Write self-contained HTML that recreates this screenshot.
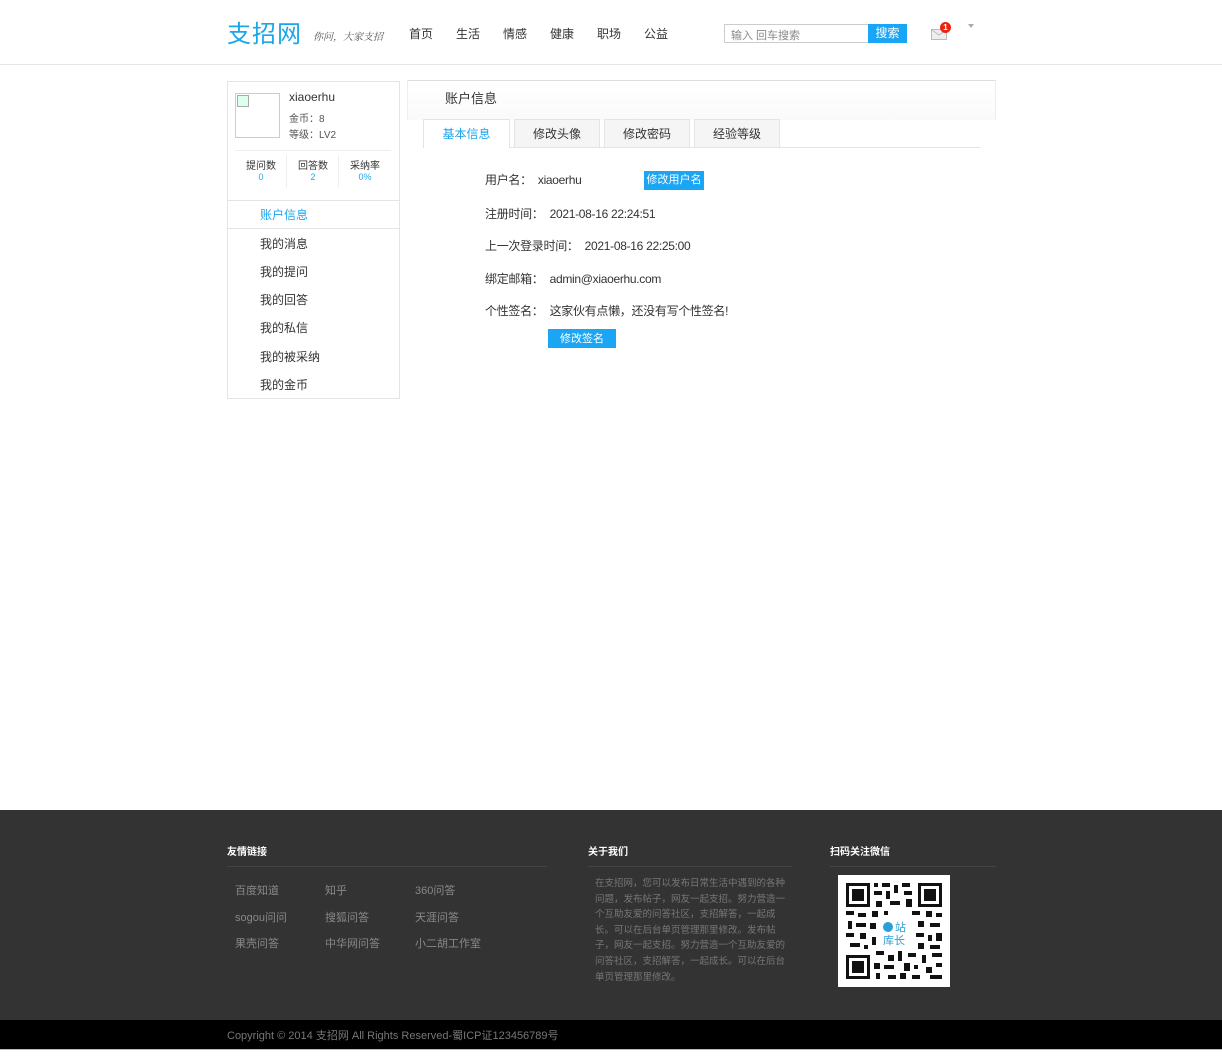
<!DOCTYPE html>
<html><head><meta charset="utf-8"><style>
*{margin:0;padding:0;box-sizing:border-box}
body{width:1222px;height:1064px;background:#fff;font-family:"Liberation Sans","Noto Sans CJK SC",sans-serif;color:#333;position:relative;overflow:hidden;font-size:12px}
.a{position:absolute;white-space:nowrap}
.hdr{position:absolute;left:0;top:0;width:1222px;height:65px;border-bottom:1px solid #e6e6e6}
.blue{color:#1da5ee}
.btn{position:absolute;background:#1ba5f5;color:#fff;font-size:11px;text-align:center}
.foot{position:absolute;left:0;top:810px;width:1222px;height:210px;background:#333}
.fl{color:#888;font-size:11px}
.row{letter-spacing:-0.3px}
</style></head><body>
<div class="hdr"></div>
<div class="a" style="left:227px;top:14px;font-size:24px;color:#1aa6e9;letter-spacing:1px">支招网</div>
<div class="a" style="left:313px;top:28px;font-size:10px;color:#555;font-family:'Liberation Serif','Noto Serif CJK SC',serif;font-style:italic">你问，大家支招</div>
<div class="a" style="left:409px;top:25px;font-size:12px">首页</div>
<div class="a" style="left:456px;top:25px;font-size:12px">生活</div>
<div class="a" style="left:503px;top:25px;font-size:12px">情感</div>
<div class="a" style="left:550px;top:25px;font-size:12px">健康</div>
<div class="a" style="left:597px;top:25px;font-size:12px">职场</div>
<div class="a" style="left:644px;top:25px;font-size:12px">公益</div>
<div class="a" style="left:724px;top:24px;width:145px;height:19px;border:1px solid #ccc;font-size:11px;color:#888;padding:2px 6px">输入 回车搜索</div>
<div class="btn" style="left:868px;top:24px;width:39px;height:19px;line-height:19px;font-size:12px">搜索</div>
<svg class="a" style="left:931px;top:27px" width="17" height="14"><rect x="0.5" y="2.5" width="15" height="10" fill="#eee" stroke="#bbb"/><path d="M1 3l7 5 7-5" fill="none" stroke="#bbb"/></svg>
<div class="a" style="left:940px;top:22px;width:11px;height:11px;border-radius:50%;background:#e21;color:#fff;font-size:8px;line-height:11px;text-align:center;font-weight:bold">1</div>
<div class="a" style="left:968px;top:24px;width:0;height:0;border-left:3px solid transparent;border-right:3px solid transparent;border-top:4px solid #aaa"></div>

<div class="a" style="left:227px;top:81px;width:173px;height:318px;border:1px solid #e4e4e4"></div>
<div class="a" style="left:228px;top:200px;width:171px;height:1px;background:#e4e4e4"></div>
<div class="a" style="left:228px;top:228px;width:171px;height:1px;background:#e4e4e4"></div>
<div class="a" style="left:235px;top:93px;width:45px;height:45px;border:1px solid #ccc"></div>
<div class="a" style="left:237px;top:95px;width:12px;height:12px;border:1px solid #aaa;background:#dfe"></div>
<div class="a" style="left:289px;top:90px;font-size:12px">xiaoerhu</div>
<div class="a" style="left:289px;top:110px;font-size:10px;color:#555">金币：8</div>
<div class="a" style="left:289px;top:126px;font-size:10px;color:#555">等级：LV2</div>
<div class="a" style="left:235px;top:150px;width:156px;height:1px;background:#eee"></div>
<div class="a" style="left:286px;top:155px;width:1px;height:33px;background:#eee"></div>
<div class="a" style="left:338px;top:155px;width:1px;height:33px;background:#eee"></div>
<div class="a" style="left:235px;top:157px;width:52px;text-align:center;font-size:10px">提问数<br><span class="blue" style="font-size:9px">0</span></div>
<div class="a" style="left:287px;top:157px;width:52px;text-align:center;font-size:10px">回答数<br><span class="blue" style="font-size:9px">2</span></div>
<div class="a" style="left:339px;top:157px;width:52px;text-align:center;font-size:10px">采纳率<br><span class="blue" style="font-size:9px">0%</span></div>
<div class="a blue" style="left:260px;top:206px;font-size:12px">账户信息</div>
<div class="a" style="left:260px;top:235px;font-size:12px">我的消息</div>
<div class="a" style="left:260px;top:263px;font-size:12px">我的提问</div>
<div class="a" style="left:260px;top:291px;font-size:12px">我的回答</div>
<div class="a" style="left:260px;top:319px;font-size:12px">我的私信</div>
<div class="a" style="left:260px;top:348px;font-size:12px">我的被采纳</div>
<div class="a" style="left:260px;top:376px;font-size:12px">我的金币</div>

<div class="a" style="left:407px;top:80px;width:589px;height:40px;border-top:1px solid #ddd;border-left:1px solid #eee;border-right:1px solid #eee;background:linear-gradient(#fff,#fafafa)"></div>
<div class="a" style="left:445px;top:88px;font-size:13px">账户信息</div>
<div class="a" style="left:423px;top:147px;width:557px;height:1px;background:#e4e4e4"></div>
<div class="a blue" style="left:423px;top:119px;width:87px;height:29px;border:1px solid #e4e4e4;border-bottom:none;background:#fff;text-align:center;line-height:28px;font-size:12px">基本信息</div>
<div class="a" style="left:514px;top:119px;width:86px;height:28px;border:1px solid #e4e4e4;border-bottom:none;background:#f5f5f5;text-align:center;line-height:28px;font-size:12px">修改头像</div>
<div class="a" style="left:604px;top:119px;width:86px;height:28px;border:1px solid #e4e4e4;border-bottom:none;background:#f5f5f5;text-align:center;line-height:28px;font-size:12px">修改密码</div>
<div class="a" style="left:694px;top:119px;width:86px;height:28px;border:1px solid #e4e4e4;border-bottom:none;background:#f5f5f5;text-align:center;line-height:28px;font-size:12px">经验等级</div>
<div class="a row" style="left:485px;top:171px;font-size:12px">用户名：&nbsp; xiaoerhu</div>
<div class="btn" style="left:644px;top:171px;width:60px;height:19px;line-height:19px">修改用户名</div>
<div class="a row" style="left:485px;top:205px;font-size:12px">注册时间：&nbsp; 2021-08-16 22:24:51</div>
<div class="a row" style="left:485px;top:237px;font-size:12px">上一次登录时间：&nbsp; 2021-08-16 22:25:00</div>
<div class="a row" style="left:485px;top:270px;font-size:12px">绑定邮箱：&nbsp; admin@xiaoerhu.com</div>
<div class="a row" style="left:485px;top:302px;font-size:12px">个性签名：&nbsp; 这家伙有点懒，还没有写个性签名!</div>
<div class="btn" style="left:548px;top:329px;width:68px;height:19px;line-height:21px">修改签名</div>

<div class="foot"></div>
<div class="a" style="left:227px;top:843px;font-size:10px;color:#fff;font-weight:bold">友情链接</div>
<div class="a" style="left:227px;top:866px;width:320px;height:1px;background:#444"></div>
<div class="a fl" style="left:235px;top:882px">百度知道</div>
<div class="a fl" style="left:325px;top:882px">知乎</div>
<div class="a fl" style="left:415px;top:882px">360问答</div>
<div class="a fl" style="left:235px;top:909px">sogou问问</div>
<div class="a fl" style="left:325px;top:909px">搜狐问答</div>
<div class="a fl" style="left:415px;top:909px">天涯问答</div>
<div class="a fl" style="left:235px;top:935px">果壳问答</div>
<div class="a fl" style="left:325px;top:935px">中华网问答</div>
<div class="a fl" style="left:415px;top:935px">小二胡工作室</div>
<div class="a" style="left:588px;top:843px;font-size:10px;color:#fff;font-weight:bold">关于我们</div>
<div class="a" style="left:588px;top:866px;width:204px;height:1px;background:#444"></div>
<div class="a" style="left:595px;top:876px;width:192px;white-space:normal;font-size:9.5px;line-height:15.6px;color:#777">在支招网，您可以发布日常生活中遇到的各种问题，发布帖子，网友一起支招。努力营造一个互助友爱的问答社区，支招解答，一起成长。可以在后台单页管理那里修改。发布帖子，网友一起支招。努力营造一个互助友爱的问答社区，支招解答，一起成长。可以在后台单页管理那里修改。</div>
<div class="a" style="left:830px;top:843px;font-size:10px;color:#fff;font-weight:bold">扫码关注微信</div>
<div class="a" style="left:830px;top:866px;width:166px;height:1px;background:#444"></div>
<svg class="a" style="left:838px;top:875px" width="112" height="112" viewBox="0 0 112 112">
<rect width="112" height="112" fill="#fff"/>
<g fill="#111"><path d="M8 8h24v24H8zM80 8h24v24H80zM8 80h24v24H8z"/></g>
<g fill="#fff"><path d="M11 11h18v18H11zM83 11h18v18H83zM11 83h18v18H11z"/></g>
<g fill="#111"><path d="M14 14h12v12H14zM86 14h12v12H86zM14 86h12v12H14z"/>
<path d="M36 8h4v4h-4zM44 8h8v4h-8zM56 10h4v8h-4zM64 8h8v4h-8zM36 16h8v4h-8zM48 16h4v8h-4zM66 16h8v4h-8zM38 26h6v6h-6zM52 26h10v4H52zM68 24h6v8h-6zM8 36h8v4H8zM20 38h8v4h-8zM34 36h6v6h-6zM46 36h4v8h-4zM74 36h8v4h-8zM88 36h6v6h-6zM98 38h6v4h-6zM10 46h4v8h-4zM18 48h10v4H18zM32 48h6v6h-6zM80 46h6v6h-6zM92 48h10v4H92zM8 58h8v4H8zM22 58h6v6h-6zM34 62h4v8h-4zM78 58h8v4h-8zM90 60h4v6h-4zM98 58h6v8h-6zM12 68h10v4H12zM26 70h4v4h-4zM80 68h6v6h-6zM92 70h10v4H92zM38 76h8v4h-8zM50 80h6v6h-6zM60 76h4v10h-4zM70 78h8v4h-8zM84 80h4v8h-4zM94 78h10v4H94zM36 88h6v6h-6zM46 90h10v4H46zM66 88h6v8h-6zM76 90h4v4h-4zM88 92h6v6h-6zM98 88h6v4h-6zM38 98h4v6h-4zM50 100h8v4h-8zM62 98h6v6h-6zM74 100h8v4h-8zM92 100h12v4H92z"/></g>
<rect x="40" y="40" width="32" height="32" fill="#fff"/>
<circle cx="50" cy="52" r="5" fill="#2a9fd6"/>
<text x="57" y="56" font-size="11" fill="#2a9fd6" font-family="Noto Sans CJK SC">站</text>
<text x="45" y="69" font-size="11" fill="#2a9fd6" font-family="Noto Sans CJK SC">库长</text>
</svg>
<div class="a" style="left:0;top:1020px;width:1222px;height:29px;background:#000"></div>
<div class="a" style="left:227px;top:1027px;font-size:11px;color:#777">Copyright © 2014 支招网 All Rights Reserved-蜀ICP证123456789号</div>
<div class="a" style="left:0;top:1049px;width:1222px;height:1px;background:#bbb"></div>
</body></html>
